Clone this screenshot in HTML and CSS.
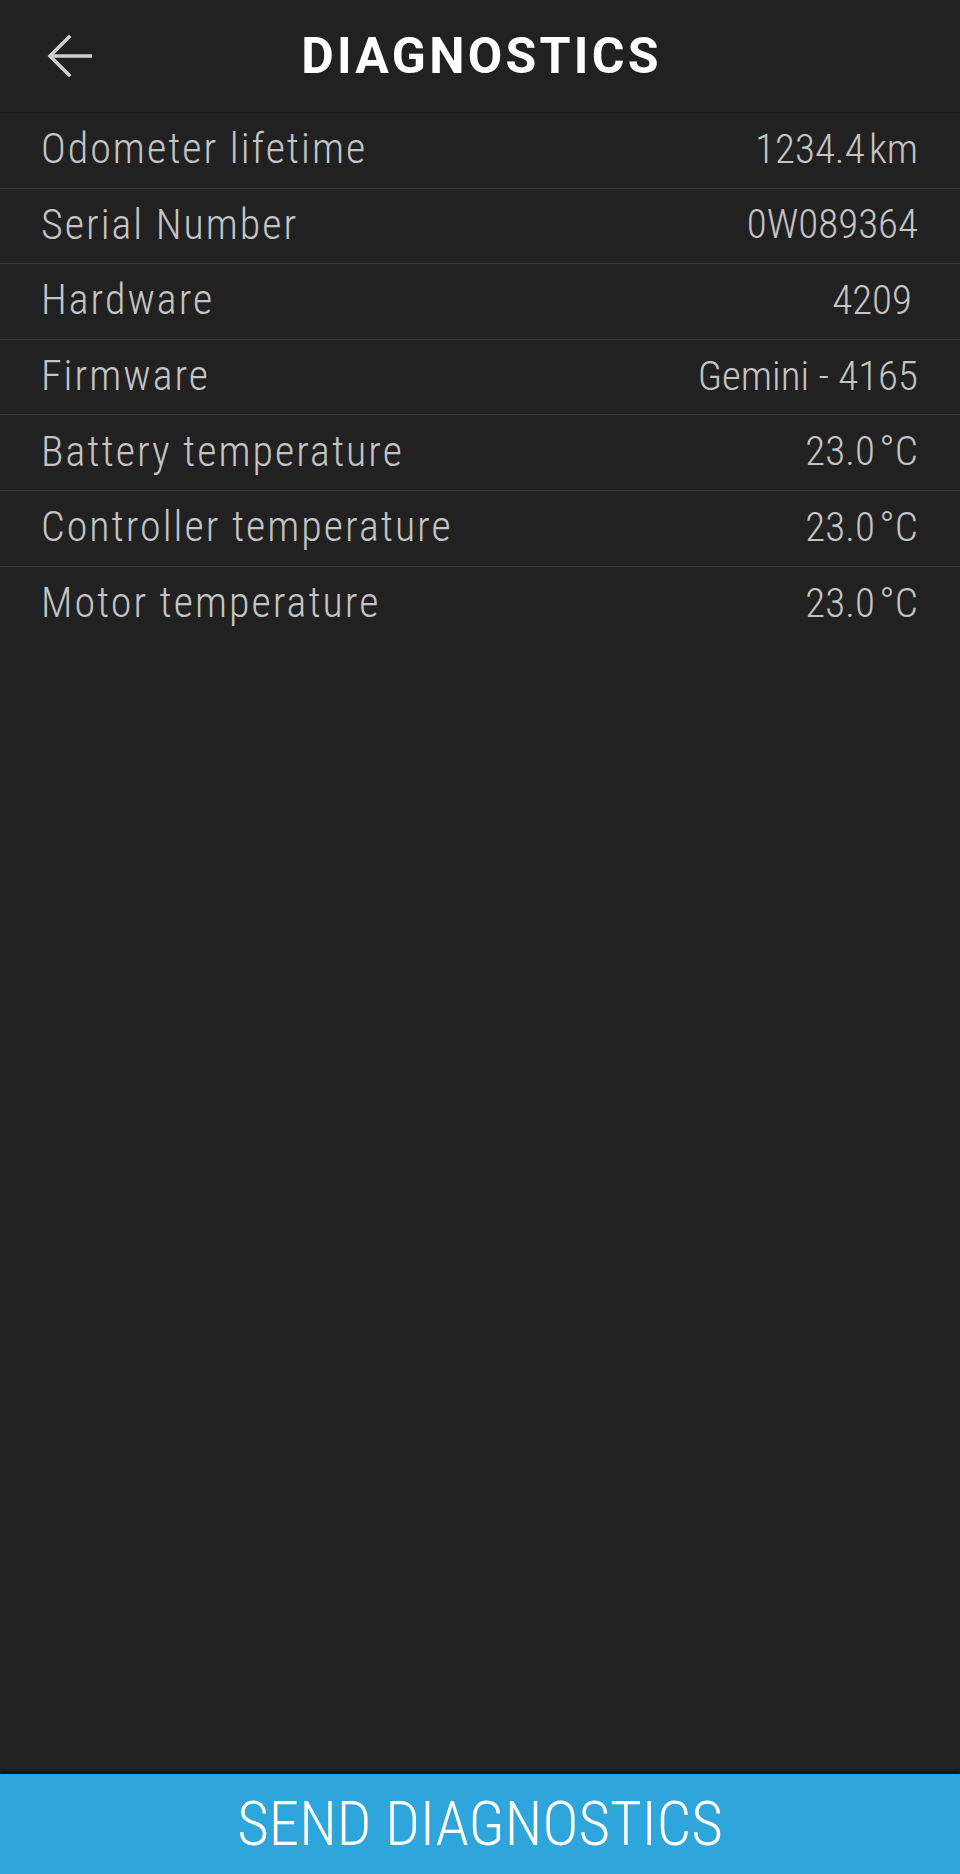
FILE: index.html
```html
<!DOCTYPE html>
<html lang="en">
<head>
    <meta charset="UTF-8">
    <meta name="viewport" content="width=device-width, initial-scale=1.0">
    <title>Diagnostics</title>
    <link rel="stylesheet" href="styles.css">
</head>
<body>

<div class="tela">
    <div class="topo">
        <button class="voltar" aria-label="Back">
            <svg width="54" height="48" viewBox="0 0 54 48">
                <polyline points="30,8 11,27 30,46" fill="none" stroke="#cfcfcf" stroke-width="3.5" stroke-linecap="square"/>
                <line x1="12" y1="27" x2="53" y2="27" stroke="#cfcfcf" stroke-width="3.5"/>
            </svg>
        </button>
        <h1>DIAGNOSTICS</h1>
    </div>

    <div class="lista">
        <div class="linha"><span class="rotulo">Odometer lifetime</span><span>1234.4&#8202;km</span></div>
        <div class="linha"><span class="rotulo">Serial Number</span><span>0W089364</span></div>
        <div class="linha"><span class="rotulo">Hardware</span><span class="recuo">4209</span></div>
        <div class="linha"><span class="rotulo">Firmware</span><span>Gemini - 4165</span></div>
        <div class="linha"><span class="rotulo">Battery temperature</span><span>23.0&#8202;°C</span></div>
        <div class="linha"><span class="rotulo">Controller temperature</span><span>23.0&#8202;°C</span></div>
        <div class="linha"><span class="rotulo">Motor temperature</span><span>23.0&#8202;°C</span></div>
    </div>

    <button class="enviar">SEND DIAGNOSTICS</button>
</div>

</body>
</html>
```

FILE: styles.css
```css
body {
    margin: 0;
    background-color: #212121;
    font-family: "Roboto Condensed", Roboto, "Liberation Sans", sans-serif;
}
.tela {
    display: flex;
    flex-direction: column;
    height: 1874px;
}
.topo {
    position: relative;
    height: 112px;
    border-bottom: 1px solid #1b1b1b;
    display: flex;
    align-items: center;
    justify-content: center;
}
.topo h1 {
    margin: 0 0 0 3px;
    font-family: Roboto, sans-serif;
    font-weight: 700;
    font-size: 50px;
    letter-spacing: 3.3px;
    color: #ffffff;
}
.voltar {
    position: absolute;
    left: 39px;
    top: 29px;
    padding: 0;
    border: none;
    background: none;
    width: 54px;
    height: 48px;
}
.linha {
    box-sizing: border-box;
    height: 75.6px;
    padding: 0 42px 3px 41px;
    border-bottom: 1px solid #3a3a3a;
    display: flex;
    align-items: center;
    justify-content: space-between;
    font-weight: 300;
    font-size: 41px;
    color: #c4c4c4;
}
.linha:last-child {
    border-bottom: none;
}
.rotulo {
    font-size: 42px;
    letter-spacing: 2px;
}
.recuo {
    padding-right: 6px;
}
.enviar {
    margin-top: auto;
    height: 100px;
    border: none;
    background-color: #2ea6dc;
    box-shadow: 0 -2px 3px rgba(0, 0, 0, 0.5);
    color: #ffffff;
    font-family: "Roboto Condensed", Roboto, sans-serif;
    font-weight: 300;
    font-size: 61px;
}
```
